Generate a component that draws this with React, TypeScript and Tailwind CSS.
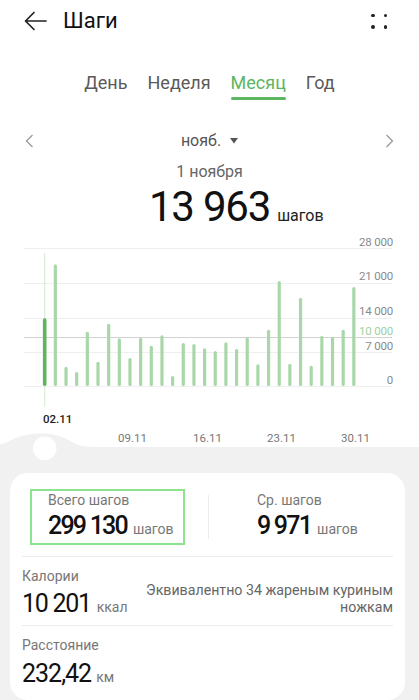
import React from "react";

const bars = [67.7, 121.7, 19.3, 14, 54.3, 24.3, 62.3, 47.7, 28, 48.3, 40.3, 50.7, 10, 43, 42, 37.7, 35, 43.7, 37, 48.7, 21.7, 56.3, 105, 22.3, 88.3, 20.3, 50.3, 49, 56.3, 99];

const F = { fontFamily: "Roboto, 'Noto Sans', sans-serif" };

function Chart() {
  const base = 155;
  const grid = [17, 52, 87, 121, 155];
  const ylabels: [string, number, string][] = [
    ["28 000", 15, "#8a8a8a"],
    ["21 000", 49, "#8a8a8a"],
    ["14 000", 84, "#8a8a8a"],
    ["10 000", 104, "#9fd09f"],
    ["7 000", 118.5, "#8a8a8a"],
    ["0", 153, "#8a8a8a"],
  ];
  const xl: [string, number][] = [
    ["09.11", 118],
    ["16.11", 193],
    ["23.11", 267],
    ["30.11", 341],
  ];
  return (
    <svg width="419" height="216" viewBox="0 0 419 216" className="block" style={F}>
      {grid.map((y) => (
        <line key={y} x1="24" x2="392" y1={y + 0.5} y2={y + 0.5} stroke="#efefef" strokeWidth="1" />
      ))}
      <line x1="24" x2="392" y1="106.5" y2="106.5" stroke="#d2d2d2" strokeWidth="1" />
      <line x1="44.7" x2="44.7" y1="22" y2="176" stroke="#d6e8d6" strokeWidth="1" />
      {bars.map((h, i) => {
        const cx = 44.7 + i * 10.66;
        const w = i === 0 ? 3.6 : 3.2;
        return (
          <rect
            key={i}
            x={cx - w / 2}
            y={base - h}
            width={w}
            height={h}
            rx={w / 2}
            fill={i === 0 ? "#5fb45f" : "#a9d7a9"}
          />
        );
      })}
      {ylabels.map(([t, y, c]) => (
        <text key={t} x="393" y={y} textAnchor="end" fontSize="11.5" fill={c} letterSpacing="-0.2">
          {t}
        </text>
      ))}
      <text x="43" y="192" fontSize="11.5" fontWeight="500" fill="#222">
        02.11
      </text>
      {xl.map(([t, x]) => (
        <text key={t} x={x} y="211" fontSize="11.5" fill="#777">
          {t}
        </text>
      ))}
    </svg>
  );
}

export default function App() {
  return (
    <div className="w-[419px] h-[700px] bg-white overflow-hidden flex flex-col" style={F}>
      {/* header */}
      <div className="h-[42px] flex items-center px-[24px] shrink-0">
        <svg width="23" height="20" viewBox="0 0 23 20" className="shrink-0">
          <path d="M22 10H1.5M10 1.5L1.5 10L10 18.5" fill="none" stroke="#222" strokeWidth="1.7" strokeLinecap="round" strokeLinejoin="round" />
        </svg>
        <span className="ml-[16px] text-[22px] leading-[28px] text-[#111]">Шаги</span>
        <div className="ml-auto mr-[8px] grid grid-cols-2 gap-x-[9px] gap-y-[8px]">
          <span className="w-[3.5px] h-[3.5px] rounded-full bg-[#222]" />
          <span className="w-[3.5px] h-[3.5px] rounded-full bg-[#222]" />
          <span className="w-[3.5px] h-[3.5px] rounded-full bg-[#222]" />
          <span className="w-[3.5px] h-[3.5px] rounded-full bg-[#222]" />
        </div>
      </div>

      {/* tabs */}
      <div className="pt-[29px] flex justify-center gap-[20px] text-[18px] leading-[24px] shrink-0">
        <span className="text-[#5a5a5a]">День</span>
        <span className="text-[#5a5a5a]">Неделя</span>
        <div className="flex flex-col items-stretch">
          <span className="text-[#5cb560]">Месяц</span>
          <span className="mt-[2px] h-[3px] rounded-full bg-[#5cb560]" />
        </div>
        <span className="text-[#5a5a5a]">Год</span>
      </div>

      {/* month selector */}
      <div className="mt-[30px] h-[22px] flex items-center justify-between px-[25px] shrink-0">
        <svg width="9" height="14" viewBox="0 0 9 14">
          <path d="M7.5 1L1.5 7L7.5 13" fill="none" stroke="#9a9a9a" strokeWidth="1.3" />
        </svg>
        <div className="flex items-center text-[16px] leading-[22px] text-[#555]">
          <span>нояб.</span>
          <svg width="8" height="6" viewBox="0 0 8 6" className="ml-[9px]">
            <path d="M0 0H8L4 5.5Z" fill="#555" />
          </svg>
        </div>
        <svg width="9" height="14" viewBox="0 0 9 14">
          <path d="M1.5 1L7.5 7L1.5 13" fill="none" stroke="#9a9a9a" strokeWidth="1.3" />
        </svg>
      </div>

      <div className="mt-[9px] text-center text-[16px] leading-[22px] text-[#666] shrink-0">1 ноября</div>

      <div className="grid grid-cols-[1fr_auto_1fr] items-baseline shrink-0">
        <span />
        <span className="text-[42px] leading-[48px] text-[#111] tracking-[-1.2px]">13 963</span>
        <span className="ml-[7px] text-[16px] text-[#222]">шагов</span>
      </div>

      <div className="shrink-0">
        <Chart />
      </div>

      {/* bottom gray */}
      <div className="relative flex-1 bg-[#f1f1f1] pt-[26px]">
        <svg width="110" height="30" viewBox="0 0 110 30" className="absolute left-0 top-[-14px]">
          <path d="M0 14 L0 11.5 C9 10 17 0.5 42 0.5 C62 0.5 70 9 79 12 C86 14 92 14.2 110 14.2 L110 30 L0 30 Z" fill="#f1f1f1" />
          <circle cx="44.7" cy="15.3" r="11.8" fill="#ffffff" />
        </svg>

        <div className="ml-[10px] mr-[14px] bg-white rounded-[18px] px-[12px] pt-[16px] pb-[11px]">
          {/* top row */}
          <div className="flex items-center">
            <div className="ml-[8px] w-[155px] h-[56px] border-2 border-[#8ee38e] pl-[16px] flex flex-col">
              <span className="text-[14px] leading-[18px] text-[#777]">Всего шагов</span>
              <div className="mt-[2px] flex items-baseline">
                <span className="text-[25px] leading-[30px] font-medium text-[#111] tracking-[-1.8px]">299 130</span>
                <span className="ml-[6px] text-[14px] text-[#777]">шагов</span>
              </div>
            </div>
            <div className="ml-[23px] w-px h-[44px] bg-[#ececec]" />
            <div className="ml-[48px] h-[56px] flex flex-col pt-[2px]">
              <span className="text-[14px] leading-[18px] text-[#777]">Ср. шагов</span>
              <div className="mt-[2px] flex items-baseline">
                <span className="text-[25px] leading-[30px] font-medium text-[#111] tracking-[-1.8px]">9 971</span>
                <span className="ml-[6px] text-[14px] text-[#777]">шагов</span>
              </div>
            </div>
          </div>

          <div className="mt-[11px] h-px bg-[#ececec]" />

          {/* calories */}
          <div className="pt-[10px] pb-[6px] flex items-end justify-between">
            <div className="flex flex-col">
              <span className="text-[14px] leading-[18px] text-[#777]">Калории</span>
              <div className="mt-[4px] flex items-baseline">
                <span className="text-[25px] leading-[30px] text-[#111] tracking-[-1.3px]">10 201</span>
                <span className="ml-[6px] text-[14px] text-[#777]">ккал</span>
              </div>
            </div>
            <div className="mb-[3px] text-right text-[14.2px] leading-[17px] text-[#666]">
              Эквивалентно 34 жареным куриным
              <br />
              ножкам
            </div>
          </div>

          <div className="h-px bg-[#ececec]" />

          {/* distance */}
          <div className="pt-[10px] flex flex-col">
            <span className="text-[14px] leading-[18px] text-[#777]">Расстояние</span>
            <div className="mt-[5px] flex items-baseline">
              <span className="text-[25px] leading-[30px] text-[#111] tracking-[-1px]">232,42</span>
              <span className="ml-[5px] text-[14px] text-[#777]">км</span>
            </div>
          </div>
        </div>
      </div>
    </div>
  );
}
